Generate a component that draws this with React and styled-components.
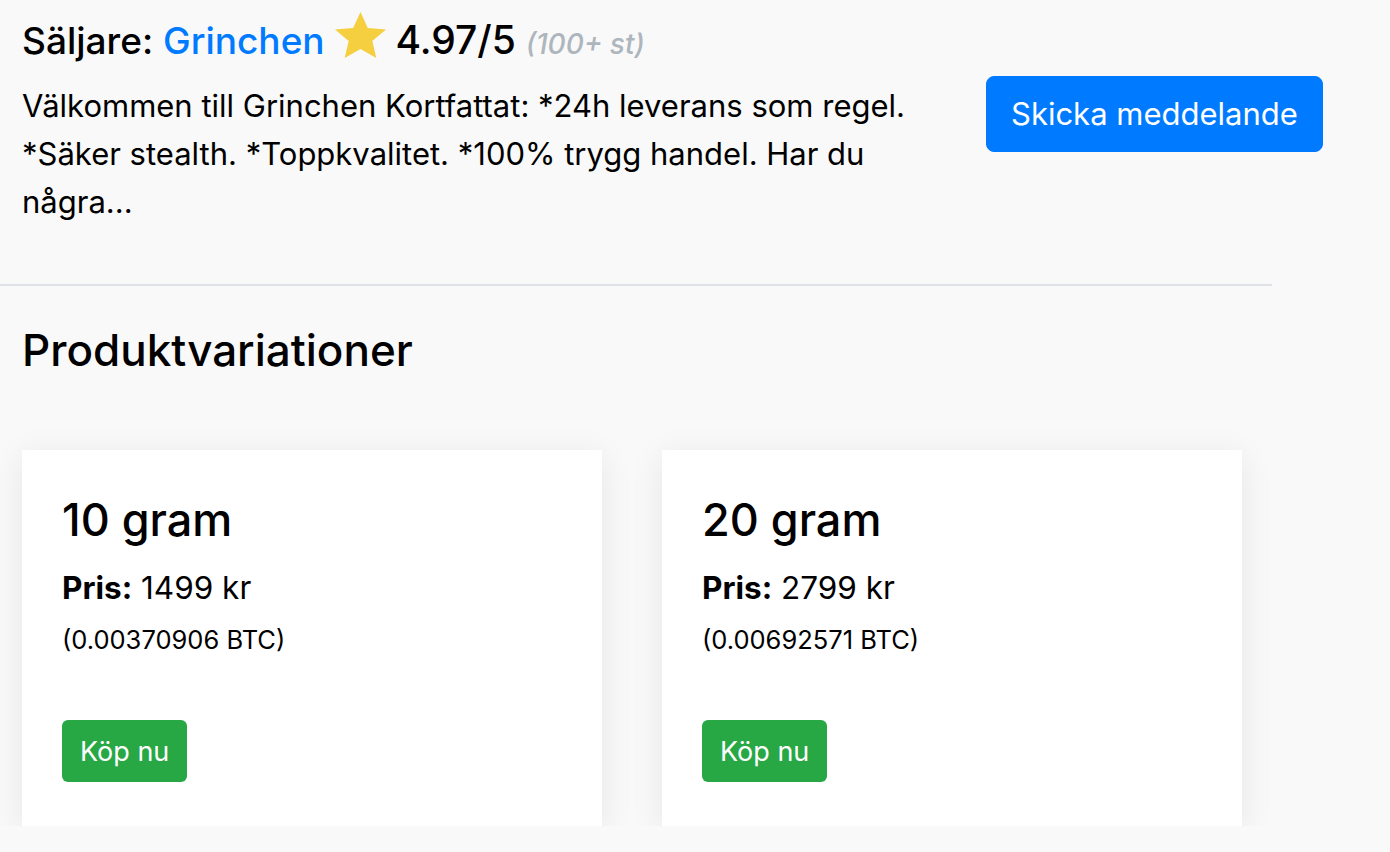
import React from 'react'
import styled, { createGlobalStyle } from 'styled-components'

const GlobalStyle = createGlobalStyle`
  body{
    margin: 0;
    background: #f9f9f9;
    font-family: Inter, "Liberation Sans", Arial, sans-serif;
    color: #000;
  }
`

const variations = [
  { name: '10 gram', price: '1499 kr', btc: '0.00370906' },
  { name: '20 gram', price: '2799 kr', btc: '0.00692571' },
]

function Star() {
  return (
    <StarIcon viewBox="1.2 1.5 21.6 20.5" preserveAspectRatio="none">
      <path d="M12 1.5l3.1 7.1 7.7.7-5.8 5.1 1.7 7.6L12 18l-6.7 4 1.7-7.6-5.8-5.1 7.7-.7z" fill="#f5cf3f"/>
    </StarIcon>
  )
}

function App() {
  return (
    <Page>
      <GlobalStyle />
      <Seller>
        <SellerInfo>
          <SellerTitle>
            Säljare: <SellerLink href="#">Grinchen</SellerLink> <Star /> <Rating>4.97/5</Rating> <Count>(100+ st)</Count>
          </SellerTitle>
          <Description>
            Välkommen till Grinchen Kortfattat: *24h leverans som regel. *Säker stealth. *Toppkvalitet. *100% trygg handel. Har du några...
          </Description>
        </SellerInfo>
        <MessageButton>Skicka meddelande</MessageButton>
      </Seller>
      <Divider />
      <Variations>
        <Heading>Produktvariationer</Heading>
        <Cards>
          {variations.map(v => (
            <Card key={v.name}>
              <CardTitle>{v.name}</CardTitle>
              <Price><b>Pris:</b> {v.price}</Price>
              <Btc>({v.btc} BTC)</Btc>
              <BuyButton>Köp nu</BuyButton>
            </Card>
          ))}
        </Cards>
      </Variations>
    </Page>
  )
}

export default App

const Page = styled.div`
  width: 1272px;
`

const Seller = styled.div`
  display: flex;
  align-items: flex-start;
  padding: 18px 0 0 22px;
`

const SellerInfo = styled.div`
  width: 940px;
  flex-shrink: 0;
`

const SellerTitle = styled.h3`
  margin: 0;
  font-size: 37px;
  font-weight: 500;
  line-height: 44px;
  white-space: nowrap;
`

const SellerLink = styled.a`
  color: #007bff;
  text-decoration: none;
`

const StarIcon = styled.svg`
  display: inline-block;
  width: 51px;
  height: 46px;
  margin-top: -10px;
  vertical-align: -4px;
`

const Rating = styled.span`
  font-size: 39px;
`

const Count = styled.span`
  font-size: 28px;
  font-style: italic;
  color: #adb5bd;
`

const Description = styled.p`
  width: 920px;
  margin: 16px 0 0;
  font-size: 31px;
  line-height: 48px;
`

const MessageButton = styled.button`
  margin: 58px 0 0 24px;
  background: #007bff;
  color: #fff;
  border: 1px solid #007bff;
  border-radius: 8px;
  font-family: inherit;
  font-size: 31px;
  line-height: 48px;
  padding: 13px 24px;
  white-space: nowrap;
  cursor: pointer;
`

const Divider = styled.hr`
  margin: 58px 0 0;
  border: 0;
  border-top: 2px solid #dee2e6;
`

const Variations = styled.section`
  padding: 38px 22px 0;
`

const Heading = styled.h2`
  margin: 0;
  font-size: 44px;
  font-weight: 500;
  line-height: 52px;
`

const Cards = styled.div`
  display: flex;
  gap: 60px;
  margin-top: 74px;
`

const Card = styled.div`
  width: 580px;
  box-sizing: border-box;
  height: 376px;
  background: #fff;
  padding: 40px 40px 44px;
  box-shadow: 0 6px 32px rgba(0, 0, 0, 0.08);
  display: flex;
  flex-direction: column;
  align-items: flex-start;
`

const CardTitle = styled.h4`
  margin: 3px 0 0;
  font-size: 45px;
  font-weight: 500;
  line-height: 54px;
`

const Price = styled.p`
  margin: 21px 0 0;
  font-size: 31.5px;
  line-height: 40px;
  b{
    font-weight: 700;
  }
`

const Btc = styled.p`
  margin: 16px 0 0;
  font-size: 25.5px;
  line-height: 32px;
`

const BuyButton = styled.button`
  margin-top: auto;
  background: #28a745;
  color: #fff;
  border: 0;
  border-radius: 6px;
  font-family: inherit;
  font-size: 27px;
  height: 62px;
  padding: 0 18px;
  cursor: pointer;
`
